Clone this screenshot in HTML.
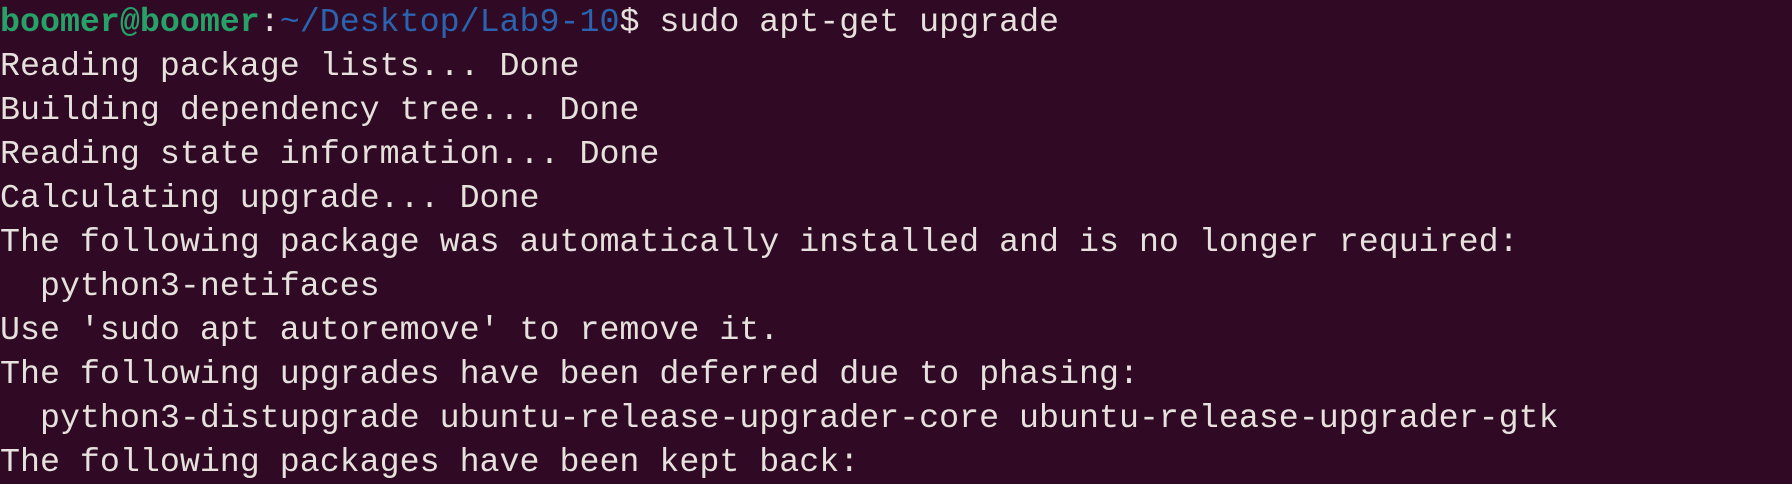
<!DOCTYPE html>
<html><head><meta charset="utf-8"><style>
html,body{margin:0;padding:0;width:1792px;height:452px;overflow:hidden;background:#300a24;}
pre{margin:0;position:absolute;left:0;top:0px;font-family:"Liberation Mono","DejaVu Sans Mono",monospace;font-size:33.3px;line-height:44px;color:#e6e1dc;white-space:pre;}
.g{color:#26a269;font-weight:bold}.b{color:#2a64b0;}
</style></head><body>
<pre><span class="g">boomer@boomer</span>:<span class="b">~/Desktop/Lab9-10</span>$ sudo apt-get upgrade
Reading package lists... Done
Building dependency tree... Done
Reading state information... Done
Calculating upgrade... Done
The following package was automatically installed and is no longer required:
  python3-netifaces
Use 'sudo apt autoremove' to remove it.
The following upgrades have been deferred due to phasing:
  python3-distupgrade ubuntu-release-upgrader-core ubuntu-release-upgrader-gtk
The following packages have been kept back:</pre>
</body></html>
